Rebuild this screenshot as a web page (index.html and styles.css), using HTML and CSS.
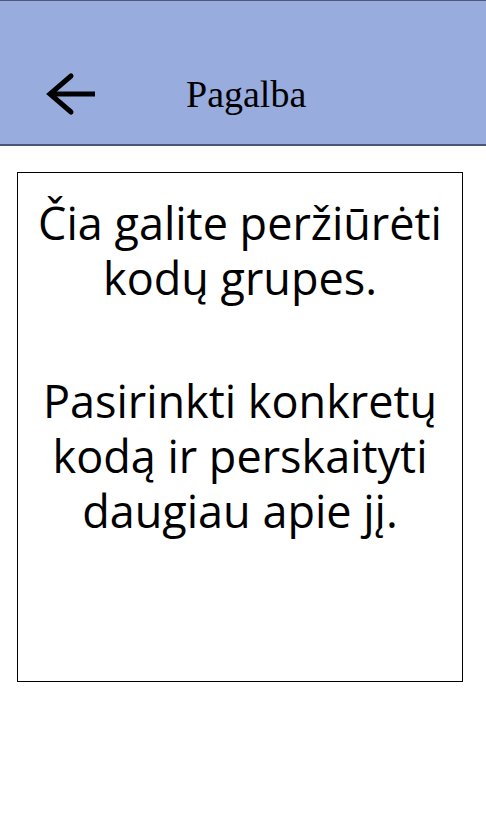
FILE: index.html
```html
<!DOCTYPE html>
<html lang="lt">
<head>
<meta charset="utf-8">
<title>Pagalba</title>
<link rel="stylesheet" href="styles.css">
</head>
<body>
<header class="topbar">
  <div class="topbar-row">
    <svg class="back" width="54" height="46" viewBox="0 0 54 46" aria-hidden="true">
      <path d="M6 23H51" fill="none" stroke="#000" stroke-width="5"/>
      <path d="M27 5L6 23L27 41" fill="none" stroke="#000" stroke-width="5" stroke-linecap="round" stroke-linejoin="miter"/>
    </svg>
    <h1 class="title">Pagalba</h1>
  </div>
</header>
<main class="card">
  <p class="para">Čia galite peržiūrėti kodų grupes.</p>
  <p class="para">Pasirinkti konkretų kodą ir perskaityti daugiau apie jį.</p>
</main>
</body>
</html>
```
FILE: styles.css
```css
html, body {
  margin: 0;
  padding: 0;
  background: #fff;
}
.topbar {
  background: #98acde;
  border-top: 1px solid #4b5877;
  border-bottom: 2px solid #4b5877;
  height: 143px;
  box-sizing: content-box;
}
.topbar-row {
  display: flex;
  align-items: center;
  height: 46px;
  padding-top: 70px;
  padding-left: 44px;
}
.back {
  display: block;
  flex: none;
}
.title {
  margin: 0 0 0 88px;
  font-family: "Liberation Serif", "Times New Roman", serif;
  font-weight: normal;
  font-size: 38px;
  line-height: 42px;
  color: #000;
}
.card {
  margin: 26px 0 0 17px;
  width: 444px;
  height: 486px;
  border: 1px solid #000;
  padding-top: 22px;
  box-sizing: content-box;
  text-align: center;
}
.para {
  margin: 0 auto 68px;
  width: 420px;
  font-family: "Open Sans", "Noto Sans", sans-serif;
  font-size: 45px;
  line-height: 55px;
  color: #000;
}
```
